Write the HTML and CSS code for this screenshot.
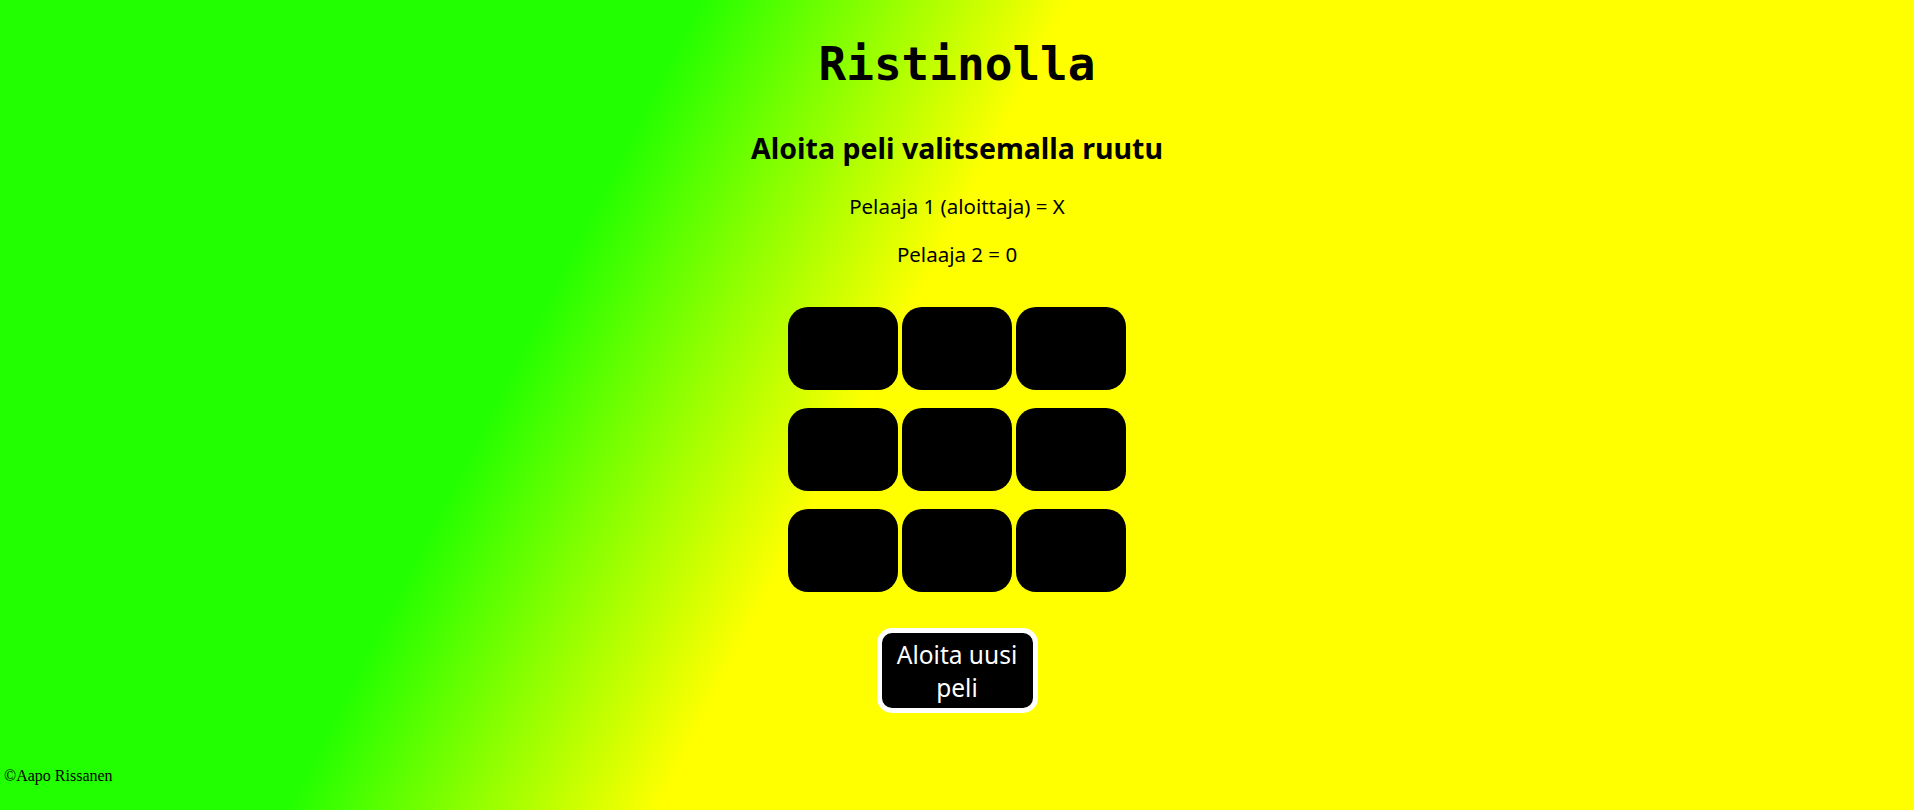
FILE: index.html
```html
<!DOCTYPE html>
<html lang="fi">
<head>
<meta charset="utf-8">
<title>Ristinolla</title>
<link rel="stylesheet" href="styles.css">
</head>
<body>
<main class="game">
  <h1 class="title">Ristinolla</h1>
  <h2 class="status">Aloita peli valitsemalla ruutu</h2>
  <p class="player player-one">Pelaaja 1 (aloittaja) = X</p>
  <p class="player player-two">Pelaaja 2 = 0</p>
  <div class="board">
    <button class="cell"></button>
    <button class="cell"></button>
    <button class="cell"></button>
    <button class="cell"></button>
    <button class="cell"></button>
    <button class="cell"></button>
    <button class="cell"></button>
    <button class="cell"></button>
    <button class="cell"></button>
  </div>
  <button class="restart">Aloita uusi peli</button>
</main>
<footer class="footer">©Aapo Rissanen</footer>
</body>
</html>
```
FILE: styles.css
```css
html {
  height: 100%;
}

body {
  margin: 0;
  min-height: 100%;
  background: linear-gradient(117deg, #22ff00 30%, #ffff00 46%);
  font-family: "Comic Sans MS", "Noto Sans", sans-serif;
  color: #000;
}

.game {
  display: flex;
  flex-direction: column;
  align-items: center;
  text-align: center;
}

.title {
  margin: 37px 0 0;
  font-family: "DejaVu Sans Mono", monospace;
  font-weight: bold;
  font-size: 46px;
  line-height: 54px;
}

.status {
  margin: 40px 0 0;
  font-weight: bold;
  font-size: 28.5px;
  line-height: 34px;
}

.player {
  margin: 0;
  font-size: 20.5px;
  line-height: 26px;
}

.player-one {
  margin-top: 28px;
}

.player-two {
  margin-top: 22px;
}

.board {
  margin-top: 40px;
  display: grid;
  grid-template-columns: repeat(3, 110px);
  grid-template-rows: repeat(3, 83px);
  column-gap: 4px;
  row-gap: 18px;
}

.cell {
  margin: 0;
  padding: 0;
  border: none;
  border-radius: 20px;
  background: #000;
}

.restart {
  margin-top: 36px;
  box-sizing: border-box;
  width: 161px;
  height: 85px;
  padding: 5px 6px 3px;
  border: 5px solid #fff;
  border-radius: 15px;
  background: #000;
  color: #fff;
  font-family: "Comic Sans MS", "Noto Sans", sans-serif;
  font-size: 24.5px;
  line-height: 33px;
  display: flex;
  align-items: flex-start;
  justify-content: center;
}

.footer {
  margin-top: 54px;
  padding-left: 4px;
  font-family: "Liberation Serif", "Times New Roman", serif;
  font-size: 16px;
  line-height: 18px;
}
```
